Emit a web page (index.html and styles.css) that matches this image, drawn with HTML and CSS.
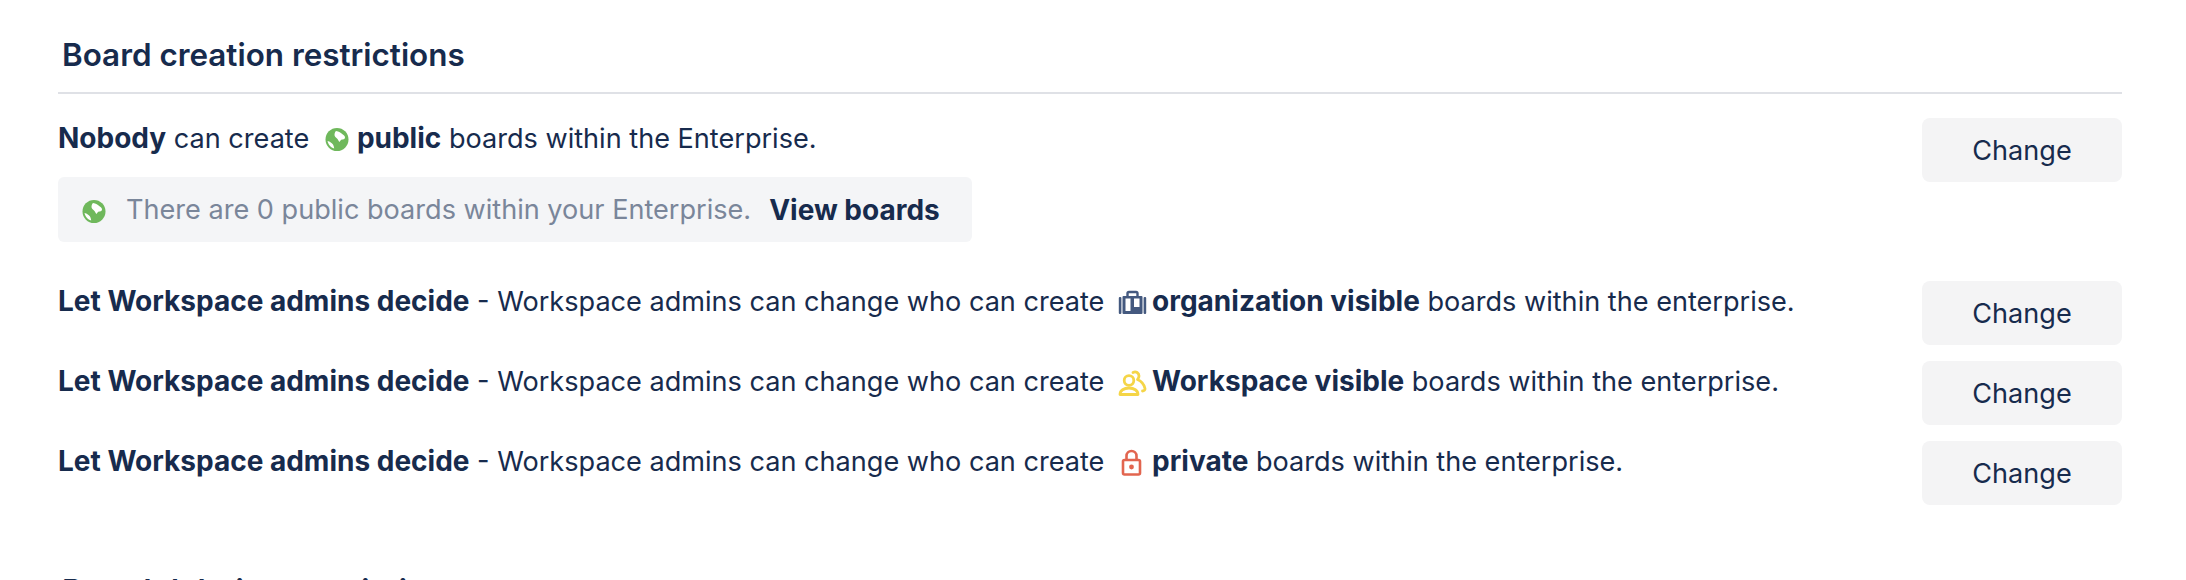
FILE: index.html
```html
<!DOCTYPE html>
<html lang="en">
<head>
  <meta charset="UTF-8">
  <title>Board creation restrictions</title>
  <link rel="stylesheet" href="styles.css">
</head>
<body>
  <div class="section">
    <h2 class="section-title">Board creation restrictions</h2>

    <div class="rows">
      <div class="row row-public">
        <div class="row-text">
          <p><b>Nobody</b> can create <svg class="icon" viewBox="0 0 32 32"><circle cx="16" cy="15.5" r="11.5" fill="#6fb85c"/><path d="M15 7c3 .3 5 2 6.500 3.200 1.500 1 2.500 1.800 2.500 3.300 0 1.500-1.500 2-3 2-1 0-1.500 1-2.500 2.500-1-1-1.500-2.500-2.500-3.500-1-1-2.500-2-2.500-3.500 0-1.500.5-3.500 1.500-4z" fill="#fff"/><path d="M6.500 17c2.500.5 4.500 2 5.500 3.500 .7 1.200 1 3 1.200 4-3.300-.8-6-3.800-6.700-7.500z" fill="#fff"/></svg><b>public</b> boards within the Enterprise.</p>
          <div class="info">
            <svg class="icon-small" viewBox="0 0 32 32"><circle cx="16" cy="15.5" r="11.500" fill="#6fb85c"/><path d="M15 7c3 .3 5 2 6.500 3.200 1.500 1 2.500 1.800 2.500 3.300 0 1.500-1.500 2-3 2-1 0-1.500 1-2.500 2.500-1-1-1.500-2.500-2.500-3.500-1-1-2.500-2-2.500-3.500 0-1.500.5-3.500 1.500-4z" fill="#fff"/><path d="M6.500 17c2.500.5 4.500 2 5.500 3.500 .7 1.200 1 3 1.200 4-3.300-.8-6-3.800-6.700-7.500z" fill="#fff"/></svg>
            <span>There are 0 public boards within your Enterprise.</span>
            <a class="info-link">View boards</a>
          </div>
        </div>
        <button class="change-btn">Change</button>
      </div>

      <div class="row">
        <p class="row-text"><b>Let Workspace admins decide</b> - Workspace admins can change who can create <svg class="icon" viewBox="0 0 32 32"><path d="M11.500 9V6.500c0-1 .8-1.500 1.500-1.500h7c.8 0 1.500.6 1.500 1.500V9" fill="none" stroke="#44597f" stroke-width="2.400"/><rect x="6.500" y="9" width="20" height="18" rx="1" fill="#44597f"/><rect x="9.500" y="11.500" width="5" height="12.500" fill="#fff"/><rect x="18" y="11.500" width="5.500" height="8.500" fill="#fff"/><rect x="2.800" y="10" width="2.600" height="17" rx="1" fill="#44597f"/><rect x="27.600" y="10" width="2.600" height="17" rx="1" fill="#44597f"/></svg><b>organization visible</b> boards within the enterprise.</p>
        <button class="change-btn">Change</button>
      </div>

      <div class="row">
        <p class="row-text"><b>Let Workspace admins decide</b> - Workspace admins can change who can create <svg class="icon" viewBox="0 0 32 32"><g fill="none" stroke="#f5d547" stroke-width="2.800" stroke-linejoin="round" stroke-linecap="round"><circle cx="13" cy="13.500" r="4.800"/><path d="M4 27.500c0-4 4-6.500 9-6.500s9 2.500 9 6.500z"/><path d="M17 5.500c3-1.500 6 .5 6 3.500 0 1.500-.5 2.500-1.500 3.500 3.500 1.500 6.500 4.500 7.500 9 .2 1.500-1 2.500-2.500 2.500"/></g></svg><b>Workspace visible</b> boards within the enterprise.</p>
        <button class="change-btn">Change</button>
      </div>

      <div class="row">
        <p class="row-text"><b>Let Workspace admins decide</b> - Workspace admins can change who can create <svg class="icon" viewBox="0 0 32 32"><rect x="7" y="13" width="17" height="14.500" rx="1.500" fill="none" stroke="#e2654f" stroke-width="2.600"/><path d="M10.500 13V9c0-3 2.200-5 5-5s5 2 5 5v4" fill="none" stroke="#e2654f" stroke-width="2.600"/><circle cx="15.500" cy="20" r="2.400" fill="#e2654f"/></svg><b>private</b> boards within the enterprise.</p>
        <button class="change-btn">Change</button>
      </div>
    </div>
  </div>

  <div class="section section-next">
    <h2 class="section-title">Board deletion restrictions</h2>
  </div>
</body>
</html>
```

FILE: styles.css
```css
* {
  margin: 0;
  padding: 0;
  box-sizing: border-box;
}
html, body {
  height: 100%;
  overflow: hidden;
  background: #fff;
}
body {
  padding: 32px 64px 0 58px;
  font-family: 'Inter', sans-serif;
  font-size: 27.1px;
  line-height: 40px;
  color: #172b4d;
}
b {
  font-size: 28px;
  font-weight: 700;
}

/* Section heading */
.section-title {
  padding: 3px 0 17px 4px;
  font-size: 31.4px;
  font-weight: 600;
  line-height: 40px;
  border-bottom: 2px solid #dfe1e6;
}
.section-next {
  margin-top: 63px;
}
.rows {
  display: flex;
  flex-direction: column;
  gap: 16px;
  margin-top: 24px;
}

/* Rows */
.row {
  display: flex;
  justify-content: space-between;
  align-items: flex-start;
}
.row-public {
  margin-bottom: 23px;
}
.icon {
  display: inline-block;
  width: 32px;
  height: 32px;
  margin: 0 4px;
  vertical-align: -8px;
}

/* Info box */
.info {
  display: inline-flex;
  align-items: center;
  height: 65px;
  margin-top: 18px;
  padding: 0 32px 0 20px;
  border-radius: 6px;
  background: #f4f5f7;
  color: #7a869a;
}
.icon-small {
  width: 32px;
  height: 32px;
  margin-top: 5px;
  margin-right: 16px;
}
.info-link {
  margin-left: 18px;
  font-size: 28px;
  font-weight: 700;
  color: #172b4d;
}

.change-btn {
  flex: none;
  width: 200px;
  height: 64px;
  padding-top: 2px;
  border: none;
  border-radius: 8px;
  background: #f4f4f5;
  font: inherit;
  color: #172b4d;
  cursor: pointer;
}
```
